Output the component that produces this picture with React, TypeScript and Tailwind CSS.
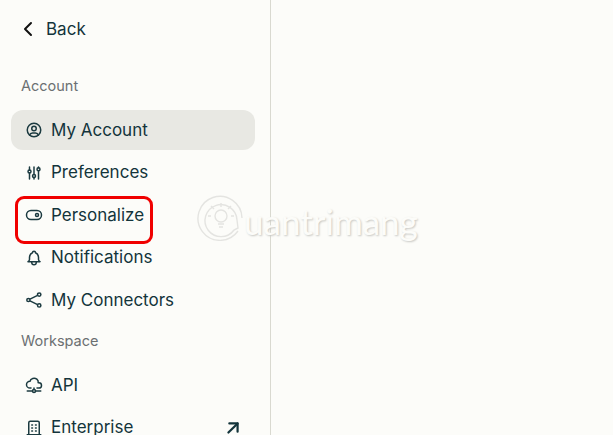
import { ReactNode } from 'react'
import { TbAdjustments, TbArrowUpRight, TbBell, TbBuilding, TbChevronLeft, TbCloudNetwork, TbToggleRight, TbUserCircle } from 'react-icons/tb'

function ConnectorsIcon() {
  return (
    <svg viewBox="0 0 18 18" fill="none" stroke="currentColor" strokeWidth="1.5" className="w-[18px] h-[18px]">
      <circle cx="3.4" cy="9" r="1.6" />
      <circle cx="14.2" cy="3.6" r="1.7" />
      <circle cx="14.2" cy="14.4" r="1.7" />
      <path d="M5 8.2 12.6 4.4M5 9.8l7.6 3.8" />
    </svg>
  )
}

function Row({ icon, label, active, trailing }: { icon: ReactNode; label: string; active?: boolean; trailing?: ReactNode }) {
  return (
    <div className={`h-10 shrink-0 rounded-xl flex items-center pl-[14px] pr-[11px] gap-[8px] text-[#13343b] ${active ? 'bg-[#e8e8e3]' : ''}`}>
      <span className="w-[18px] h-[18px] flex items-center justify-center text-[22px] text-[#1b3a40]">{icon}</span>
      <span className="text-[17px] leading-none">{label}</span>
      {trailing && <span className="ml-auto">{trailing}</span>}
    </div>
  )
}

export default function App() {
  return (
    <div className="relative flex h-[435px] w-[613px] overflow-hidden bg-[#fcfcf9] font-['Inter',sans-serif]">
      <aside className="w-[271px] h-full shrink-0 border-r border-[#d9d9d0] pl-[11px] pr-[15px] flex flex-col">
        <div className="flex items-center gap-[6px] pl-[5px] pt-[17px] h-[41px] text-[#13343b]">
          <TbChevronLeft className="w-6 h-6 text-[#111]" />
          <span className="text-[17px] leading-none">Back</span>
        </div>
        <div className="pl-[10px] mt-[36px] text-[14.5px] leading-[18px] text-[#6b7072]">Account</div>
        <nav className="mt-[15px] flex flex-col gap-[2.5px]">
          <Row icon={<TbUserCircle />} label="My Account" active />
          <Row icon={<TbAdjustments />} label="Preferences" />
          <Row icon={<TbToggleRight />} label="Personalize" />
          <Row icon={<TbBell />} label="Notifications" />
          <Row icon={<ConnectorsIcon />} label="My Connectors" />
        </nav>
        <div className="pl-[10px] mt-[12px] text-[14.5px] leading-[18px] text-[#6b7072]">Workspace</div>
        <nav className="mt-[15px] flex flex-col gap-[2.5px]">
          <Row icon={<TbCloudNetwork />} label="API" />
          <Row icon={<TbBuilding />} label="Enterprise" trailing={<TbArrowUpRight className="w-[22px] h-[22px] stroke-[2.4]" />} />
        </nav>
      </aside>

      {/* red annotation */}
      <div className="absolute left-[15px] top-[196px] w-[138px] h-[48px] rounded-[9px] border-[3px] border-[#f00000]" />

      {/* watermark */}
      <div className="absolute left-[196px] top-[193px] flex items-center pointer-events-none">
        <svg viewBox="0 0 48 48" fill="none" stroke="#e4e4e1" strokeWidth="1.4" className="w-[48px] h-[48px]">
          <path d="M42 38a22 22 0 1 1 4-13" />
          <path d="M38 37a16 16 0 1 1 3-10l1 8z" />
          <circle cx="25" cy="23" r="6" />
          <path d="M22 31h6M23 34h4M25 10v4M15 13l3 3M35 13l-3 3M12 23h3M35 23h3" />
        </svg>
        <span className="text-[35px] leading-none mt-[9px] text-[#fcfcf9] [text-shadow:1px_1px_2px_#c8c8c4] font-['Lato',sans-serif]">uantrimang</span>
      </div>
    </div>
  )
}
